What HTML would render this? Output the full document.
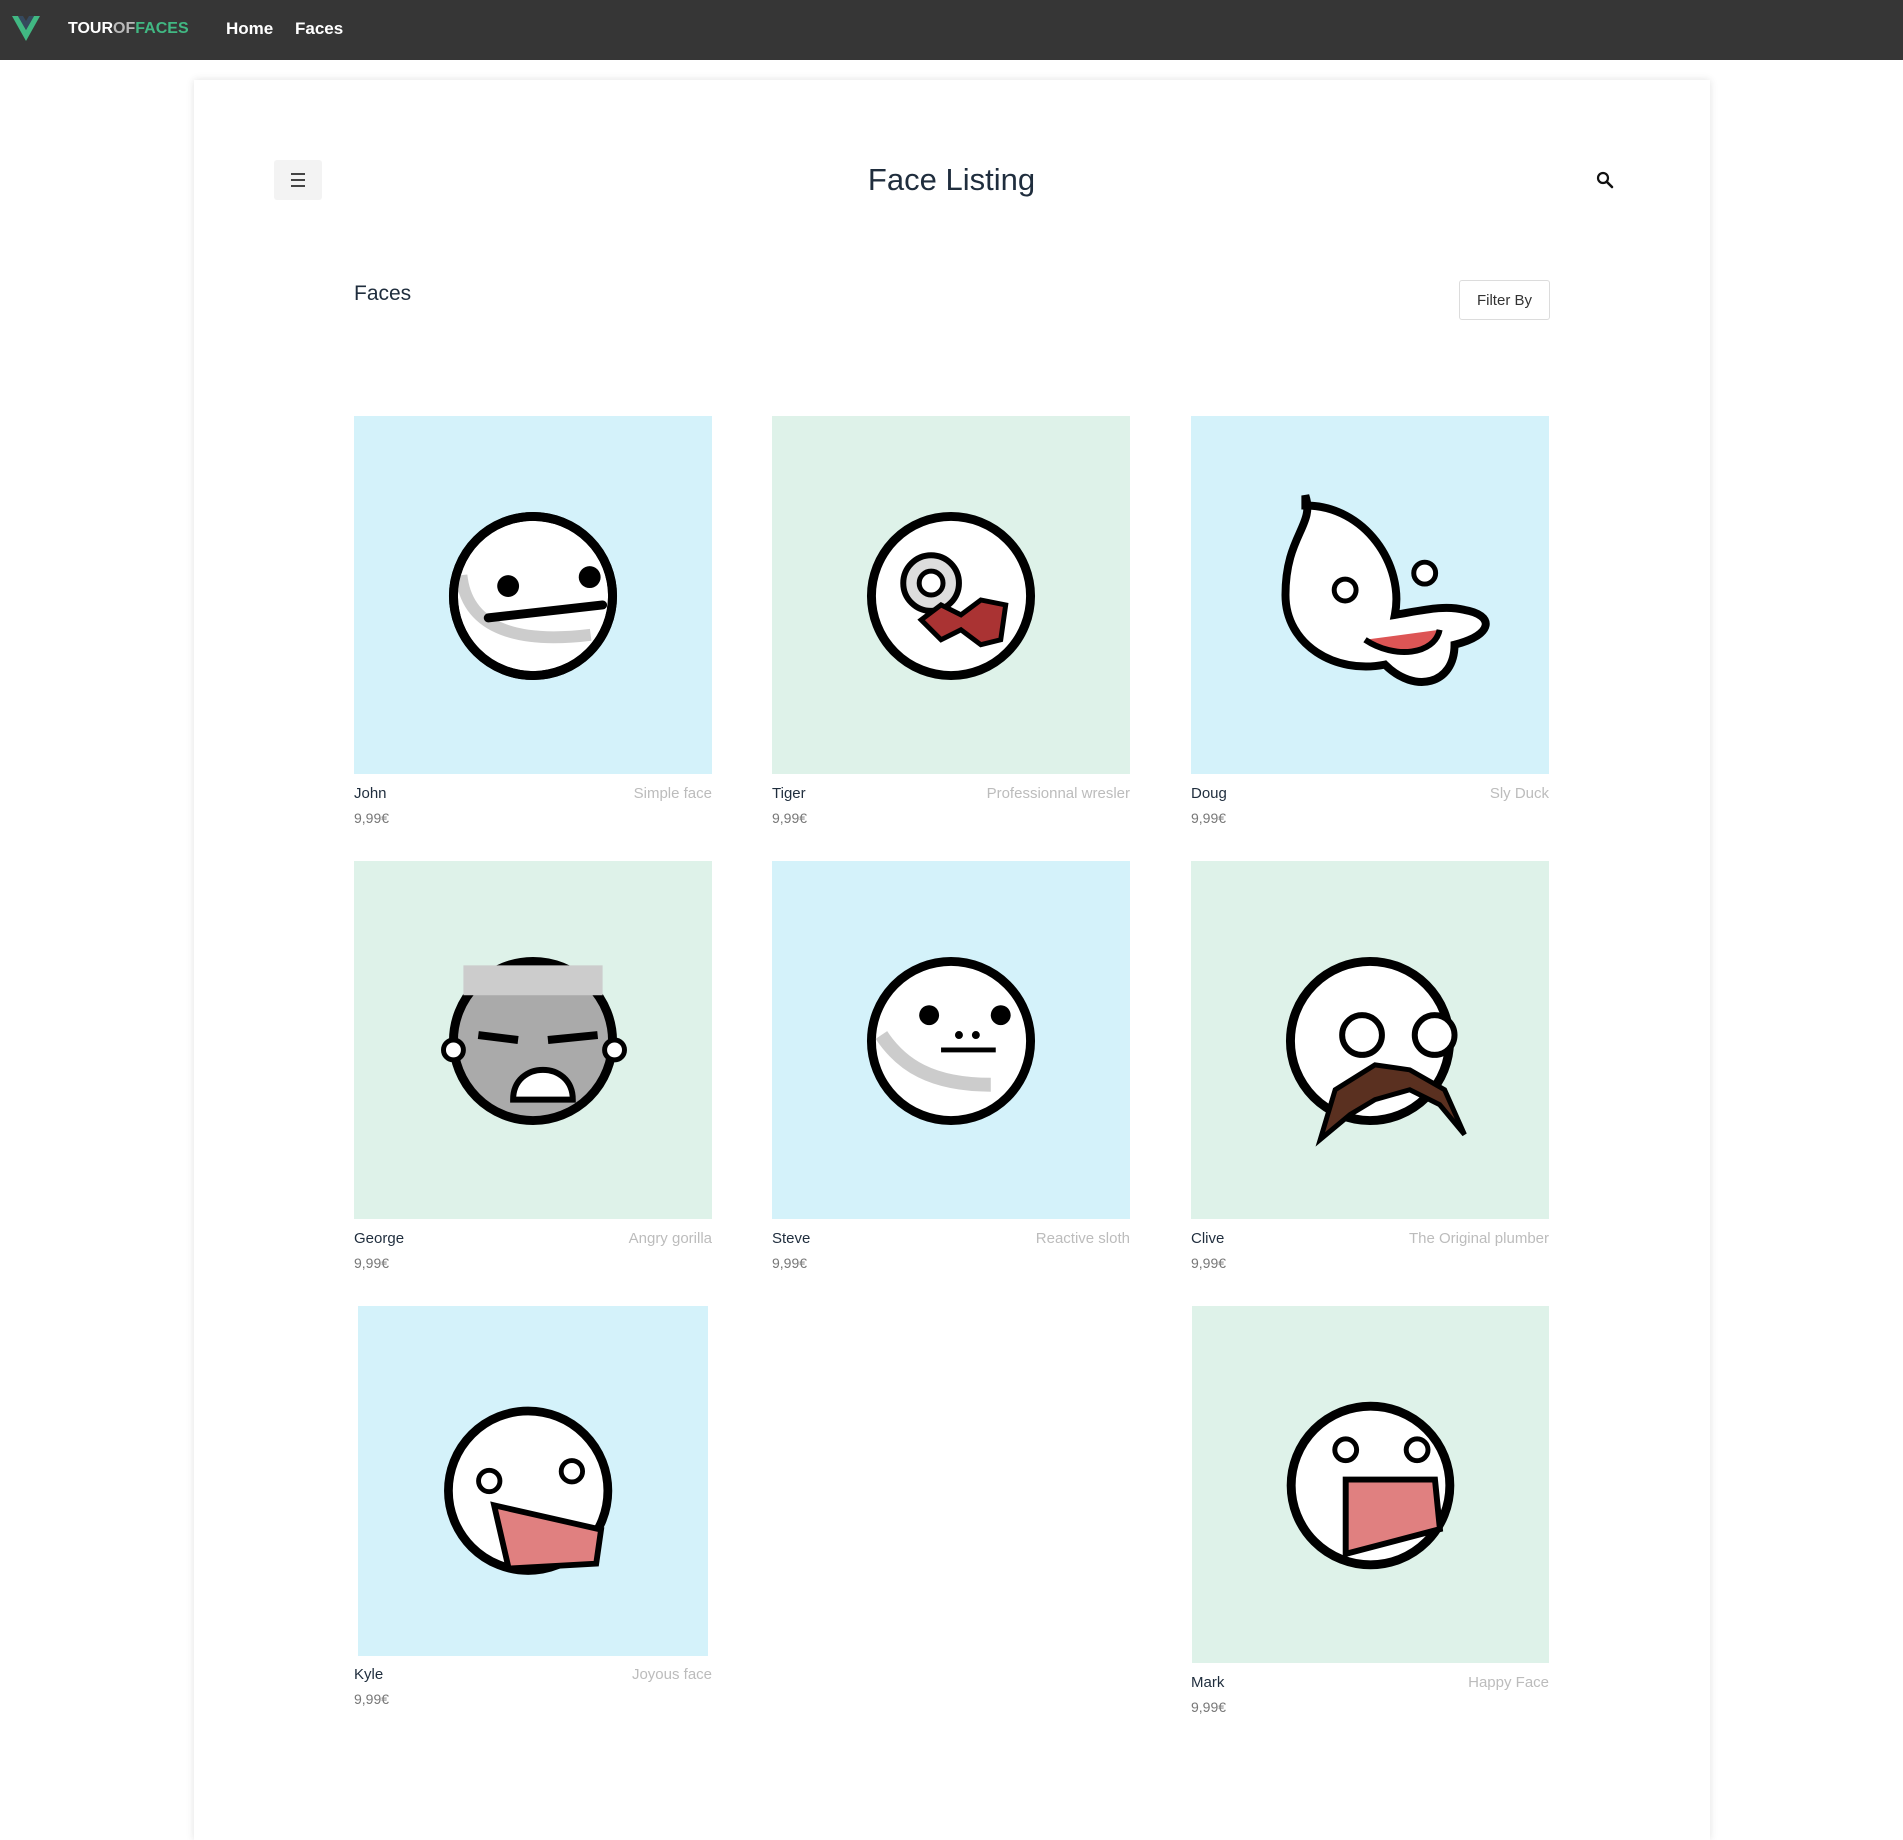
<!DOCTYPE html>
<html><head><meta charset="utf-8"><style>
*{margin:0;padding:0;box-sizing:border-box}
body{width:1903px;height:1813px;background:#fff;font-family:"Liberation Sans",sans-serif;position:relative;overflow:hidden}
.nav{position:absolute;left:0;top:0;width:1903px;height:60px;background:#363636}
.nav .brand{position:absolute;left:68px;top:20px;font-size:16px;font-weight:bold;color:#fff}
.nav a{position:absolute;top:19px;font-size:17px;font-weight:bold;color:#fff}
.card{position:absolute;left:194px;top:80px;width:1516px;height:1760px;background:#fff;box-shadow:0 0 8px rgba(0,0,0,.12)}
.ham{position:absolute;left:274px;top:160px;width:48px;height:40px;background:#f3f3f3;border-radius:3px}
.ham i{position:absolute;left:17px;width:14px;height:2px;background:#444}
h1{position:absolute;left:0;width:1903px;top:162px;text-align:center;font-weight:normal;font-size:31px;color:#1f2d3d}
h2{position:absolute;left:354px;top:282px;font-weight:normal;font-size:21px;color:#1f2d3d}
.filter{position:absolute;left:1459px;top:280px;width:91px;height:40px;border:1px solid #dcdcdc;border-radius:3px;font-size:15px;color:#333;text-align:center;line-height:40px}
.item{position:absolute}
.item svg{display:block}
.nm{position:absolute;font-size:15px;color:#1f2d3d}
.ds{position:absolute;font-size:15px;color:#bcbcbc;text-align:right}
.pr{position:absolute;font-size:14px;color:#777}
</style></head><body>
<div class="nav">
<svg style="position:absolute;left:12px;top:16px" width="28" height="26" viewBox="0 0 28 26"><path d="M0 0h6l8 14 8-14h6L14 25z" fill="#41b883"/><path d="M6 0h5l3 5 3-5h5l-8 14z" fill="#35495e"/></svg>
<div class="brand">TOUR<span style="color:#bbb">OF</span><span style="color:#41b883">FACES</span></div>
<a style="left:226px">Home</a><a style="left:295px">Faces</a>
</div>
<div class="card"></div>
<div class="ham"><i style="top:13px"></i><i style="top:19px"></i><i style="top:25px"></i></div>
<h1>Face Listing</h1>
<svg style="position:absolute;left:1596px;top:171px" width="18" height="18" viewBox="0 0 18 18"><circle cx="7" cy="7" r="5" fill="none" stroke="#111" stroke-width="2.2"/><path d="M11 11l5 5" stroke="#111" stroke-width="2.6" stroke-linecap="round"/></svg>
<h2>Faces</h2>
<div class="filter">Filter By</div>

<svg class="item" style="left:354px;top:416px" width="358" height="358" viewBox="0 0 360 360"><rect width="360" height="360" fill="#d4f2fa"/><circle cx="180" cy="181" r="80" fill="#fff" stroke="#000" stroke-width="9"/><path d="M108 160c5 50 50 70 130 60" stroke="#ccc" stroke-width="12" fill="none"/><circle cx="180" cy="181" r="80" fill="none" stroke="#000" stroke-width="9"/><circle cx="155" cy="171" r="11"/><circle cx="237" cy="162" r="11"/><path d="M135 203l115-13" stroke="#000" stroke-width="9" stroke-linecap="round"/></svg>
<svg class="item" style="left:772px;top:416px" width="358" height="358" viewBox="0 0 360 360"><rect width="360" height="360" fill="#def2e9"/><circle cx="180" cy="181" r="80" fill="#fff" stroke="#000" stroke-width="9"/><circle cx="160" cy="168" r="28" fill="#ddd" stroke="#000" stroke-width="6"/><circle cx="160" cy="168" r="12" fill="#fff" stroke="#000" stroke-width="5"/><path d="M150 205l20-15 20 10 20-15 25 5-5 35-20 5-20-15-20 10z" fill="#a33" stroke="#000" stroke-width="5"/></svg>
<svg class="item" style="left:1191px;top:416px" width="358" height="358" viewBox="0 0 360 360"><rect width="360" height="360" fill="#d4f2fa"/><path d="M115 80c10 30-20 40-20 100 0 50 50 80 100 70 30 30 70 20 70-20 40-10 40-30 10-35-20-5-40 0-70 5 10-50-30-110-90-110z" fill="#fff" stroke="#000" stroke-width="8"/><circle cx="155" cy="175" r="11" fill="#fff" stroke="#000" stroke-width="5"/><circle cx="235" cy="158" r="11" fill="#fff" stroke="#000" stroke-width="5"/><path d="M175 225c30 20 70 15 75-10" fill="#d55" stroke="#000" stroke-width="6"/></svg>
<div class="nm" style="left:354px;top:785px">John</div><div class="ds" style="left:554px;width:158px;top:785px">Simple face</div><div class="pr" style="left:354px;top:810px">9,99€</div>
<div class="nm" style="left:772px;top:785px">Tiger</div><div class="ds" style="left:900px;width:230px;top:785px">Professionnal wresler</div><div class="pr" style="left:772px;top:810px">9,99€</div>
<div class="nm" style="left:1191px;top:785px">Doug</div><div class="ds" style="left:1400px;width:149px;top:785px">Sly Duck</div><div class="pr" style="left:1191px;top:810px">9,99€</div>

<svg class="item" style="left:354px;top:861px" width="358" height="358" viewBox="0 0 360 360"><rect width="360" height="360" fill="#def2e9"/><circle cx="180" cy="181" r="80" fill="#aaa" stroke="#000" stroke-width="9"/><path d="M110 120h140" stroke="#ccc" stroke-width="30"/><path d="M125 175l40 5M195 180l50-5" stroke="#000" stroke-width="8"/><path d="M160 240c0-40 60-40 60 0z" fill="#fff" stroke="#000" stroke-width="6"/><circle cx="100" cy="190" r="10" fill="#fff" stroke="#000" stroke-width="5"/><circle cx="262" cy="190" r="10" fill="#fff" stroke="#000" stroke-width="5"/></svg>
<svg class="item" style="left:772px;top:861px" width="358" height="358" viewBox="0 0 360 360"><rect width="360" height="360" fill="#d4f2fa"/><circle cx="180" cy="181" r="80" fill="#fff" stroke="#000" stroke-width="9"/><path d="M110 175c20 30 50 50 110 50" stroke="#ccc" stroke-width="14" fill="none"/><circle cx="158" cy="155" r="10"/><circle cx="230" cy="155" r="10"/><circle cx="188" cy="175" r="4"/><circle cx="205" cy="175" r="4"/><path d="M170 190h55" stroke="#000" stroke-width="5"/></svg>
<svg class="item" style="left:1191px;top:861px" width="358" height="358" viewBox="0 0 360 360"><rect width="360" height="360" fill="#def2e9"/><circle cx="180" cy="181" r="80" fill="#fff" stroke="#000" stroke-width="9"/><circle cx="172" cy="175" r="20" fill="#fff" stroke="#000" stroke-width="6"/><circle cx="245" cy="175" r="20" fill="#fff" stroke="#000" stroke-width="6"/><path d="M130 280l15-50 40-25 35 5 35 20 20 45-25-30-30-15-35 10-25 15z" fill="#5a3020" stroke="#000" stroke-width="5"/></svg>
<div class="nm" style="left:354px;top:1230px">George</div><div class="ds" style="left:554px;width:158px;top:1230px">Angry gorilla</div><div class="pr" style="left:354px;top:1255px">9,99€</div>
<div class="nm" style="left:772px;top:1230px">Steve</div><div class="ds" style="left:900px;width:230px;top:1230px">Reactive sloth</div><div class="pr" style="left:772px;top:1255px">9,99€</div>
<div class="nm" style="left:1191px;top:1230px">Clive</div><div class="ds" style="left:1340px;width:209px;top:1230px">The Original plumber</div><div class="pr" style="left:1191px;top:1255px">9,99€</div>

<svg class="item" style="left:358px;top:1306px" width="350" height="350" viewBox="0 0 360 360"><rect width="360" height="360" fill="#d4f2fa"/><circle cx="175" cy="190" r="82" fill="#fff" stroke="#000" stroke-width="9"/><circle cx="135" cy="180" r="11" fill="#fff" stroke="#000" stroke-width="5"/><circle cx="220" cy="170" r="11" fill="#fff" stroke="#000" stroke-width="5"/><path d="M140 205l110 25-5 35-90 5z" fill="#e08080" stroke="#000" stroke-width="6"/></svg>
<svg class="item" style="left:1191px;top:1306px" width="359" height="357" viewBox="0 0 360 360"><rect width="360" height="360" fill="#def2e9"/><circle cx="180" cy="181" r="80" fill="#fff" stroke="#000" stroke-width="9"/><circle cx="155" cy="145" r="11" fill="#fff" stroke="#000" stroke-width="5"/><circle cx="227" cy="145" r="11" fill="#fff" stroke="#000" stroke-width="5"/><path d="M155 175h90l5 50-95 25z" fill="#e08080" stroke="#000" stroke-width="6"/></svg>
<div class="nm" style="left:354px;top:1666px">Kyle</div><div class="ds" style="left:554px;width:158px;top:1666px">Joyous face</div><div class="pr" style="left:354px;top:1691px">9,99€</div>
<div class="nm" style="left:1191px;top:1674px">Mark</div><div class="ds" style="left:1400px;width:149px;top:1674px">Happy Face</div><div class="pr" style="left:1191px;top:1699px">9,99€</div>
</body></html>
